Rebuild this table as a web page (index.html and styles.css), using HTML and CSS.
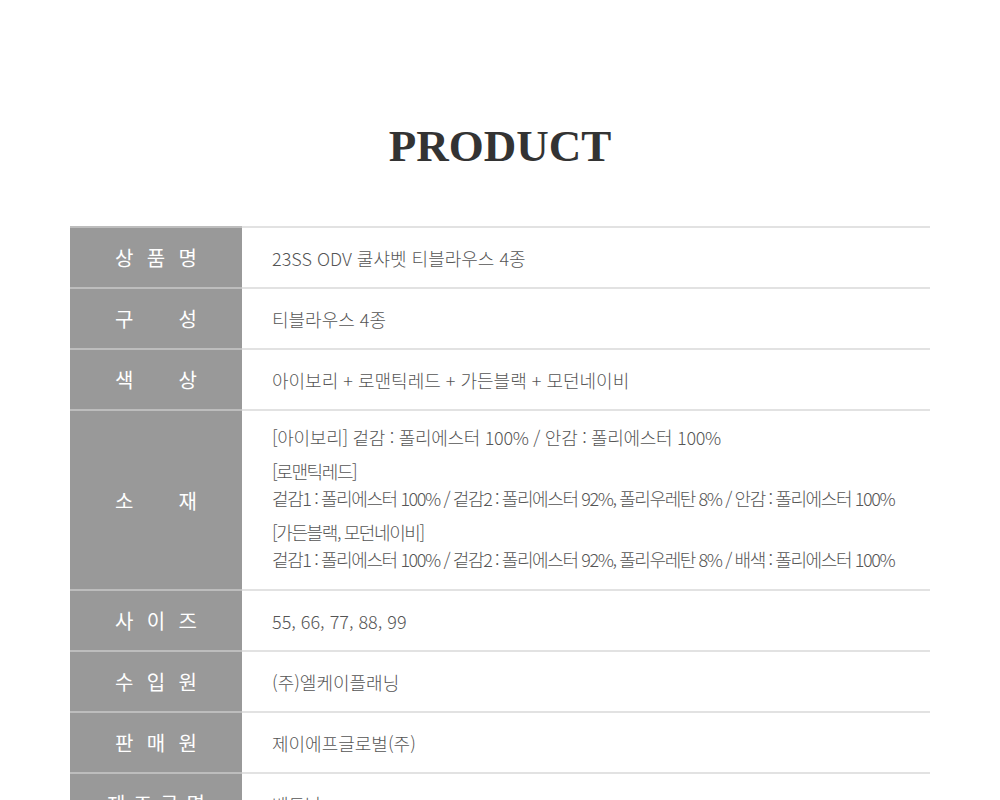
FILE: index.html
```html
<!DOCTYPE html>
<html lang="ko">
<head>
<meta charset="utf-8">
<title>PRODUCT</title>
<link rel="stylesheet" href="styles.css">
</head>
<body>
<div class="page">
  <h1 class="title">PRODUCT</h1>
  <div class="table">
    <div class="row">
      <div class="label"><span class="lt"><i>상</i><i>품</i><i>명</i></span></div>
      <div class="value">23SS ODV 쿨샤벳 티블라우스 4종</div>
    </div>
    <div class="row">
      <div class="label"><span class="lt"><i>구</i><i>성</i></span></div>
      <div class="value">티블라우스 4종</div>
    </div>
    <div class="row">
      <div class="label"><span class="lt"><i>색</i><i>상</i></span></div>
      <div class="value">아이보리 + 로맨틱레드 + 가든블랙 + 모던네이비</div>
    </div>
    <div class="row">
      <div class="label"><span class="lt"><i>소</i><i>재</i></span></div>
      <div class="value multi">
        <p class="first">[아이보리] 겉감 : 폴리에스터 100% / 안감 : 폴리에스터 100%</p>
        <p class="tight">[로맨틱레드]<br>겉감1 : 폴리에스터 100% / 겉감2 : 폴리에스터 92%, 폴리우레탄 8% / 안감 : 폴리에스터 100%</p>
        <p class="tight">[가든블랙, 모던네이비]<br>겉감1 : 폴리에스터 100% / 겉감2 : 폴리에스터 92%, 폴리우레탄 8% / 배색 : 폴리에스터 100%</p>
      </div>
    </div>
    <div class="row">
      <div class="label"><span class="lt"><i>사</i><i>이</i><i>즈</i></span></div>
      <div class="value">55, 66, 77, 88, 99</div>
    </div>
    <div class="row">
      <div class="label"><span class="lt"><i>수</i><i>입</i><i>원</i></span></div>
      <div class="value">(주)엘케이플래닝</div>
    </div>
    <div class="row">
      <div class="label"><span class="lt"><i>판</i><i>매</i><i>원</i></span></div>
      <div class="value">제이에프글로벌(주)</div>
    </div>
    <div class="row">
      <div class="label"><span class="lt wide"><i>제</i><i>조</i><i>국</i><i>명</i></span></div>
      <div class="value">베트남</div>
    </div>
  </div>
</div>
</body>
</html>
```

FILE: styles.css
```css
html, body {
  margin: 0;
  padding: 0;
  background: #fff;
}

.page {
  width: 860px;
  margin: 0 auto;
  padding-top: 119px;
}

.title {
  margin: 0 0 52px;
  text-align: center;
  font-family: "Liberation Serif", "DejaVu Serif", serif;
  font-weight: bold;
  font-size: 45px;
  line-height: 55px;
  letter-spacing: 0px;
  color: #333;
}

.table {
  display: flex;
  flex-direction: column;
}

.row {
  display: flex;
}

.label {
  width: 172px;
  flex: none;
  background: #999;
  border-top: 2px solid #bdbdbd;
  display: flex;
  align-items: center;
  justify-content: center;
  min-height: 59px;
}

.lt {
  display: flex;
  justify-content: space-between;
  width: 82px;
  font-family: "Noto Sans CJK KR", "Noto Sans", sans-serif;
  font-size: 20px;
  color: #fff;
}

.lt.wide {
  width: 98px;
}

.lt i {
  font-style: normal;
}

.value {
  flex: 1;
  border-top: 2px solid #e2e2e2;
  min-height: 59px;
  display: flex;
  flex-direction: column;
  justify-content: center;
  padding-left: 30px;
  font-family: "Noto Sans CJK KR", "Noto Sans", sans-serif;
  font-weight: 300;
  font-size: 18px;
  color: #555;
  letter-spacing: 0;
}

.value.multi {
  padding-top: 13px;
  padding-bottom: 16px;
}

.value p {
  margin: 0;
  line-height: 27px;
}

.value p + p {
  margin-top: 7px;
}

.value p.first {
  letter-spacing: -0.3px;
}

.value p.tight {
  letter-spacing: -1.4px;
}
```
